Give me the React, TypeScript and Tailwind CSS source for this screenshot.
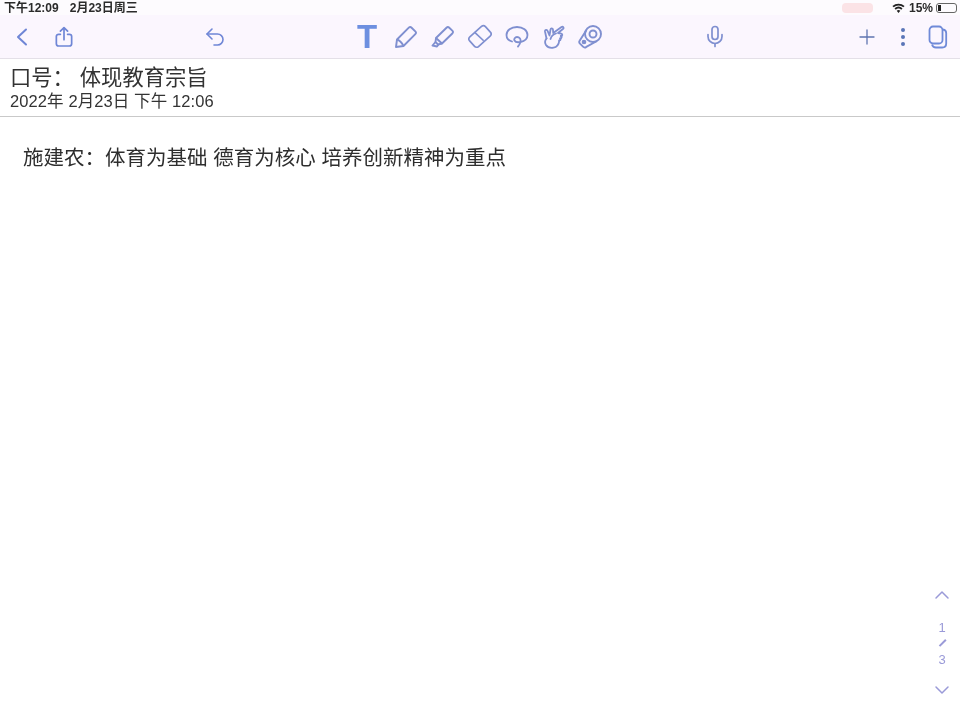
import { ChevronDown, ChevronUp, Mic, Plus, Undo2 } from 'lucide-react';

const cjk = "font-['Liberation_Sans','Noto_Sans_CJK_SC',sans-serif]";

function Back() {
  return (
    <svg width="14" height="20" viewBox="0 0 14 20" fill="none" stroke="currentColor" strokeWidth="2" strokeLinecap="round" strokeLinejoin="round">
      <path d="M11 2.500L3 10l8 7.500" />
    </svg>
  );
}

function ShareBox() {
  return (
    <svg width="18" height="22" viewBox="0 0 20 24" fill="none" stroke="currentColor" strokeWidth="1.900" strokeLinecap="round" strokeLinejoin="round">
      <path d="M6 9H4a2.500 2.500 0 0 0-2.500 2.500v8A2.500 2.500 0 0 0 4 22h12a2.500 2.500 0 0 0 2.500-2.500v-8A2.500 2.500 0 0 0 16 9h-2" />
      <path d="M10 15V2M6 5.500L10 1.500l4 4" />
    </svg>
  );
}

function Pen() {
  return (
    <svg width="24" height="24" viewBox="0 0 24 24" fill="none" stroke="currentColor" strokeWidth="1.900" strokeLinejoin="round">
      <path d="M2 22l1-7.500L14.800 2.700a2 2 0 0 1 2.800 0l3.700 3.700a2 2 0 0 1 0 2.800L9.500 21z" />
      <path d="M3 14.500c2.500.8 5 3.500 6.500 6.500" />
    </svg>
  );
}

function Highlighter() {
  return (
    <svg width="24" height="24" viewBox="0 0 24 24" fill="none" stroke="currentColor" strokeWidth="1.900" strokeLinejoin="round">
      <path d="M5 13L15.500 2.700a2 2 0 0 1 2.800 0l3 3a2 2 0 0 1 0 2.800L11 18.500z" />
      <path d="M5 13l-.5 4 2.500 2.500 4-1" />
      <path d="M4.500 17L1.500 20.500l4.500 1 1.500-2" />
    </svg>
  );
}

function Eraser() {
  return (
    <svg width="27" height="27" viewBox="0 0 26 26" fill="none" stroke="currentColor" strokeWidth="1.800" strokeLinejoin="round">
      <rect x="1.500" y="6" width="23" height="14" rx="3" transform="rotate(-42 13 13)" />
      <path d="M7 8.300l10 9.300" />
    </svg>
  );
}

function Lasso() {
  return (
    <svg width="24" height="24" viewBox="0 0 24 24" fill="none" stroke="currentColor" strokeWidth="1.800" strokeLinecap="round">
      <path d="M7 16.500C3.500 15.500 1.500 13 1.500 10 1.500 5.500 6 2 12 2s10.500 3.500 10.500 8c0 3-2.500 6-7 7-2.500.5-5 .3-6-1.500-.8-1.500.5-3.500 2.500-3.500 2.500 0 3.800 2 3.500 4.500-.2 2-1 3.500-2.500 5" />
    </svg>
  );
}

function Hand() {
  return (
    <svg width="22" height="24" viewBox="0 0 22 24" fill="none" stroke="currentColor" strokeWidth="1.800" strokeLinecap="round" strokeLinejoin="round">
      <path d="M3.500 13.500L2 6.500c-.3-1.700 2-2.200 2.600-.6L6.500 10.500 7.500 4.500c.3-1.600 2.500-1.300 2.500.3l.2 3.200L18.500 2c1.500-1 2.800 1 1.400 2L15 8l3.200.6c1.600.4 1.300 2.600-.4 2.400" />
      <path d="M17.800 11c1.400.5 1 2.500-.6 2.300" />
      <path d="M17.200 13.300c.9.700.3 2.200-.9 2" />
      <path d="M3.500 13.500C1.800 15.500 1.800 18 3 20c1.500 2.300 4.500 3.200 7.500 2.700 3-.5 5.300-3.400 5.800-7.400" />
      <path d="M7.500 14c.8-2.500 2.800-4.800 5.500-5.500" />
    </svg>
  );
}

function Laser() {
  return (
    <svg width="24" height="24" viewBox="0 0 24 24" fill="none" stroke="currentColor" strokeWidth="1.900" strokeLinejoin="round">
      <circle cx="15" cy="9" r="8" />
      <circle cx="15" cy="9" r="3.500" />
      <path d="M8.500 5L1.800 15.500a2.500 2.500 0 0 0 .2 3.200l3 3a2.500 2.500 0 0 0 3.300.2L19 16" />
      <circle cx="6" cy="17" r="1.400" fill="currentColor" />
    </svg>
  );
}

function Pages() {
  return (
    <svg width="20" height="24" viewBox="0 0 20 24" fill="none" stroke="currentColor" strokeWidth="1.800">
      <rect x="1.500" y="1.500" width="13" height="17" rx="3.500" />
      <path d="M15 4.500c2 .3 3.200 1.500 3.200 3.500v10.500c0 2.500-1.500 4-4 4H8c-2.200 0-3.500-1-4-3" />
    </svg>
  );
}

export default function App() {
  return (
    <div className={`flex h-[720px] w-[960px] flex-col overflow-hidden bg-white text-[#333] blur-[0.4px] ${cjk}`}>
      <div className="flex h-[15px] items-center justify-between bg-[#fdfbfe] pl-1 pr-[3px] text-[12px] font-semibold text-[#2b2b2b]">
        <div className="flex gap-[11px]">
          <span>下午12:09</span>
          <span>2月23日周三</span>
        </div>
        <div className="flex items-center">
          <span className="h-[10px] w-[31px] rounded-sm bg-[#fbe3e6]" />
          <svg className="ml-[19px]" width="13" height="10" viewBox="0 0 13 10" fill="#222">
            <path d="M6.500 10L4.700 7.800a2.800 2.800 0 0 1 3.600 0zM3.700 6.700L2.500 5.300a6.200 6.200 0 0 1 8 0L9.300 6.700a4.400 4.400 0 0 0-5.600 0zM1.700 4.300L.4 2.900a9.400 9.400 0 0 1 12.200 0l-1.300 1.400a7.500 7.500 0 0 0-9.600 0z" />
          </svg>
          <span className="ml-1 text-[12px]">15%</span>
          <div className="ml-[3px] flex h-[10px] w-[21px] items-stretch rounded-[3px] border border-[#666] p-[1px]">
            <span className="w-[3px] bg-[#222]" />
          </div>
        </div>
      </div>

      <div className="flex h-[44px] items-center border-b border-[#e4e0e8] bg-[#fbf6fe] pl-[10px] text-[#6f86d6]">
        <div className="flex w-6 justify-center"><Back /></div>
        <div className="ml-[18px] flex w-6 justify-center"><ShareBox /></div>
        <div className="ml-[127px] flex w-6 justify-center"><Undo2 size={26} strokeWidth={1.6} /></div>
        <div className="ml-[128px] flex w-6 justify-center">
          <span className="text-[33px] leading-none font-bold text-[#6d8fe0]">T</span>
        </div>
        <div className="ml-[15px] flex w-6 justify-center text-[#7f8fd0]"><Pen /></div>
        <div className="ml-[13px] flex w-6 justify-center text-[#7f8fd0]"><Highlighter /></div>
        <div className="ml-[13px] flex w-6 justify-center text-[#7f8fd0]"><Eraser /></div>
        <div className="ml-[13px] flex w-6 justify-center text-[#7f8fd0]"><Lasso /></div>
        <div className="ml-[13px] flex w-6 justify-center text-[#7f8fd0]"><Hand /></div>
        <div className="ml-[12px] flex w-6 justify-center text-[#7f8fd0]"><Laser /></div>
        <div className="ml-[101px] flex w-6 justify-center text-[#7f8fd0]"><Mic size={25} strokeWidth={1.7} /></div>
        <div className="ml-[128px] flex w-6 justify-center text-[#5f74b0]"><Plus size={34} strokeWidth={1.3} /></div>
        <div className="ml-[12px] flex w-6 flex-col items-center gap-[3px]">
          <span className="size-[4px] rounded-full bg-[#5a75b8]" />
          <span className="size-[4px] rounded-full bg-[#5a75b8]" />
          <span className="size-[4px] rounded-full bg-[#5a75b8]" />
        </div>
        <div className="ml-[11px] flex w-6 justify-center text-[#6f8ad8]"><Pages /></div>
      </div>

      <div className="flex h-[58px] flex-col border-b border-[#c9c9c9] pl-[10px] pt-[7px]">
        <div className="text-[21.300px] leading-[24px] whitespace-pre">口号： 体现教育宗旨</div>
        <div className="mt-[1px] text-[16.500px] leading-[20px] tracking-[0.1px] whitespace-pre">2022年 2月23日 下午 12:06</div>
      </div>

      <div className="relative flex-1">
        <p className="pl-[23px] pt-[28px] text-[20.500px] leading-[26px] text-[#2e2e2e]">施建农：体育为基础 德育为核心 培养创新精神为重点</p>
        <div className="absolute right-[6px] top-[466px] flex w-6 flex-col items-center text-[#9a9ad8]">
          <ChevronUp size={24} strokeWidth={1.5} />
          <span className="mt-[13px] text-[13px] leading-[16px] font-medium">1</span>
          <span className="mt-[6px] h-[1.500px] w-[9px] -rotate-45 bg-[#9a9ad8]" />
          <span className="mt-[8px] text-[13px] leading-[16px] font-medium">3</span>
          <div className="mt-[10px]"><ChevronDown size={24} strokeWidth={1.5} /></div>
        </div>
      </div>
    </div>
  );
}
